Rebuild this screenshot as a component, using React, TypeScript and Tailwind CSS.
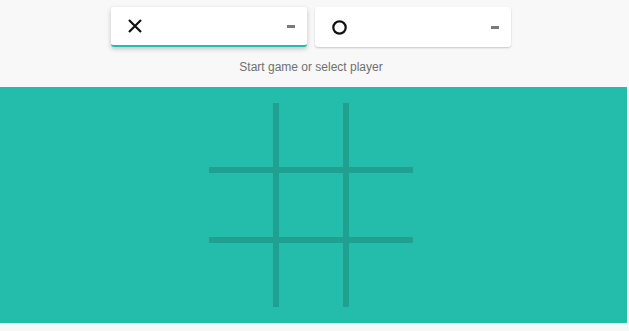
import React from 'react';

const PlayerCard: React.FC<{ active?: boolean; children: React.ReactNode }> = ({ active, children }) => (
  <div
    className={`relative flex h-[40px] w-[196px] items-center justify-between rounded-[3px] bg-white pl-[17px] pr-[12px] ${
      active
        ? 'shadow-[0_2px_5px_rgba(0,0,0,0.22)] border-b-[2px] border-[#24bcab]'
        : 'shadow-[0_1px_2px_rgba(0,0,0,0.2)]'
    }`}
  >
    {children}
    <span className="block h-[3px] w-[8px] bg-[#7a7a7a]" aria-label="-" />
  </div>
);

export default function App() {
  const cells = Array.from({ length: 9 });

  return (
    <div className="min-h-[331px] w-full bg-[#f8f8f8]" style={{ fontFamily: '"Liberation Sans", Arial, sans-serif' }}>
      {/* header with players */}
      <div className="flex h-[87px] flex-col items-center pt-[7px] pr-[7px]">
        <div className="flex gap-[8px]">
          <PlayerCard active>
            <svg width="14" height="14" viewBox="0 0 14 14">
              <path d="M1 1L13 13M13 1L1 13" stroke="#111" strokeWidth="2.2" strokeLinecap="butt" />
            </svg>
          </PlayerCard>
          <PlayerCard>
            <svg width="15" height="15" viewBox="0 0 15 15">
              <circle cx="7.5" cy="7.5" r="6.2" fill="none" stroke="#111" strokeWidth="2.2" />
            </svg>
          </PlayerCard>
        </div>
        <div className="mt-[13px] text-[12px] leading-[14px] text-[#707070]">Start game or select player</div>
      </div>

      {/* board */}
      <div className="flex h-[236px] w-[627px] justify-center bg-[#24bcab] py-[16px] pr-[5px]">
        <div className="grid grid-cols-[64px_64px_64px] grid-rows-[64px_64px_64px] gap-[6px] bg-[#1fa090]">
          {cells.map((_, i) => (
            <div key={i} className="bg-[#24bcab]" />
          ))}
        </div>
      </div>
    </div>
  );
}
